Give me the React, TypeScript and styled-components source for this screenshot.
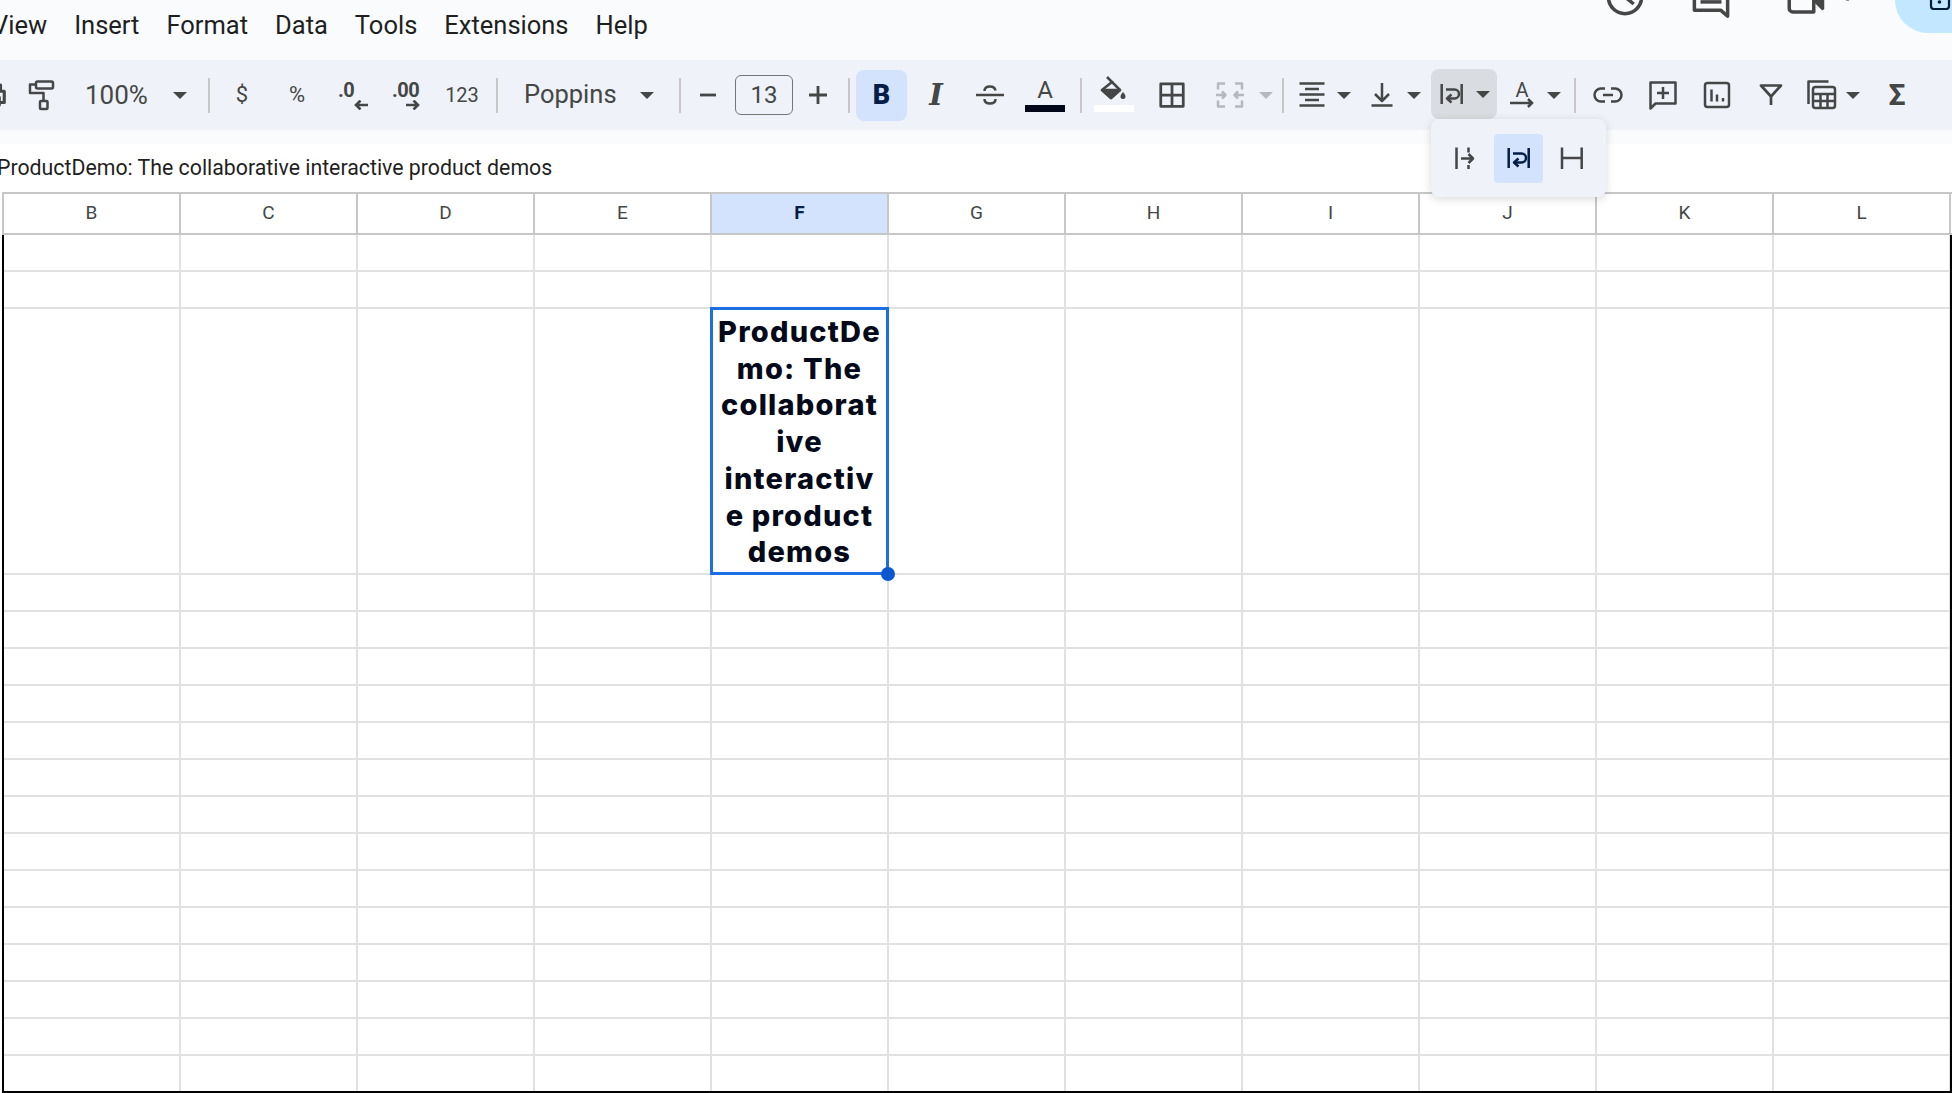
import styled, { createGlobalStyle } from 'styled-components';

const GlobalStyle = createGlobalStyle`
  html, body {
    margin: 0;
    padding: 0;
    height: 100%;
    background: #fff;
    overflow: hidden;
  }
`;

const Page = styled.div`
  width: 1952px;
  height: 1093px;
  overflow: hidden;
  font-family: Roboto, "Liberation Sans", sans-serif;
  color: #1f1f1f;
  background: #fff;
`;

const MenuBar = styled.div`
  height: 60px;
  background: #f9fbfd;
  display: flex;
  align-items: flex-start;
`;

const Menu = styled.nav`
  display: flex;
  gap: 27px;
  margin-left: -8px;
  height: 52px;
  align-items: center;
  font-size: 25.5px;
  line-height: 1;
`;

const MenuItem = styled.span`
  white-space: nowrap;
`;

const Actions = styled.div`
  margin-left: auto;
  display: flex;
  align-items: flex-start;
  color: #444746;
`;

const ActionIcon = styled.svg<{ $ml: number }>`
  width: 42px;
  height: 42px;
  margin-left: ${(p) => p.$ml}px;
  margin-top: -24px;
  flex-shrink: 0;
  fill: none;
  stroke: currentColor;
  stroke-width: 2;
  stroke-linejoin: round;
`;

const MeetCaretTip = styled.span`
  width: 3px;
  height: 1px;
  margin-left: 20.5px;
  background: #9a9a9a;
`;

const ShareButton = styled.div`
  width: 57px;
  height: 33px;
  margin-left: 46px;
  background: #c2e7ff;
  border-bottom-left-radius: 33px;
  color: #001d35;
  display: flex;
  justify-content: flex-end;
`;

const ShareLock = styled.svg`
  width: 22px;
  height: 22px;
  margin-top: -12px;
  margin-right: 1px;
  fill: none;
  stroke: currentColor;
  stroke-width: 2.2;
`;

const Toolbar = styled.div`
  height: 70px;
  background: #eff2f8;
  display: flex;
  align-items: center;
  color: #444746;
`;

const ToolbarGap = styled.div`
  height: 14px;
  background: #f9fbfd;
`;

const Tool = styled.div<{ $w: number; $ml?: number; $muted?: boolean }>`
  width: ${(p) => p.$w}px;
  margin-left: ${(p) => p.$ml ?? 0}px;
  height: 50px;
  flex-shrink: 0;
  display: flex;
  align-items: center;
  justify-content: center;
  position: relative;
  color: ${(p) => (p.$muted ? '#b5b8bc' : 'inherit')};
`;

const Icon = styled.svg<{ $size?: number }>`
  width: ${(p) => p.$size ?? 30}px;
  height: ${(p) => p.$size ?? 30}px;
  flex-shrink: 0;
  fill: none;
  stroke: currentColor;
  stroke-width: 2.5;
  stroke-linejoin: round;
`;

const Caret = styled.span<{ $off?: boolean }>`
  width: 0;
  height: 0;
  border-left: 7px solid transparent;
  border-right: 7px solid transparent;
  border-top: 7px solid ${(p) => (p.$off ? '#b5b8bc' : '#444746')};
  flex-shrink: 0;
`;

const Separator = styled.span`
  width: 2px;
  height: 35px;
  background: #c7c7c7;
`;

const ToolText = styled.span<{ $size?: number; $weight?: number }>`
  font-size: ${(p) => p.$size ?? 25.5}px;
  font-weight: ${(p) => p.$weight ?? 400};
  line-height: 1;
  white-space: nowrap;
`;

const SelectLabel = styled(Tool)`
  justify-content: flex-start;
  padding-left: ${(p) => (p.$w > 100 ? 24 : 7)}px;
  box-sizing: border-box;
`;

const Decimal = styled.div`
  display: flex;
  flex-direction: column;
  align-items: flex-start;
`;

const DecimalText = styled.span`
  font-size: 20px;
  font-weight: 700;
  line-height: 20px;
  letter-spacing: -0.5px;
`;

const DecimalArrow = styled.svg<{ $ml: number }>`
  width: 14px;
  height: 10px;
  margin-left: ${(p) => p.$ml}px;
  fill: none;
  stroke: currentColor;
  stroke-width: 2.6;
`;

const SizeBox = styled.div`
  width: 58px;
  height: 40px;
  margin-left: 15px;
  box-sizing: border-box;
  border: 1.5px solid #747775;
  border-radius: 6px;
  display: flex;
  align-items: center;
  justify-content: center;
  flex-shrink: 0;
`;

const BoldButton = styled.div`
  width: 51px;
  height: 51px;
  margin-left: 1px;
  background: #d3e3fd;
  border-radius: 8px;
  color: #041e49;
  display: flex;
  align-items: center;
  justify-content: center;
  flex-shrink: 0;
`;

const SerifItalic = styled.span`
  font-family: "DejaVu Serif", serif;
  font-style: italic;
  font-weight: 700;
  font-size: 29px;
  line-height: 1;
`;

const ColorTool = styled.div<{ $pb?: number }>`
  display: flex;
  flex-direction: column;
  align-items: center;
  padding-bottom: ${(p) => p.$pb ?? 0}px;
`;

const ColorLetter = styled.span<{ $size?: number }>`
  font-size: ${(p) => p.$size ?? 24}px;
  line-height: ${(p) => p.$size ?? 24}px;
`;

const ColorBar = styled.span<{ $color: string; $mt?: number }>`
  width: 40px;
  height: 7px;
  margin-top: ${(p) => p.$mt ?? 0}px;
  background: ${(p) => p.$color};
`;

const RotationArrow = styled.svg`
  width: 24px;
  height: 10px;
  margin-top: -2px;
  fill: none;
  stroke: currentColor;
  stroke-width: 2.5;
`;

const FillIcon = styled(Icon)`
  width: 32px;
  height: 30px;
`;

const WrapButton = styled.div`
  width: 66px;
  height: 50px;
  margin-left: 7px;
  margin-top: -2px;
  flex-shrink: 0;
  border-radius: 8px;
  background: #d9dce0;
  display: flex;
  align-items: center;
  padding-left: 6px;
  box-sizing: border-box;
  gap: 9px;
  position: relative;
`;

const Popup = styled.div`
  position: absolute;
  top: 50px;
  left: 0;
  width: 175px;
  height: 78px;
  background: #eff2f8;
  border-radius: 8px;
  box-shadow: 0 2px 8px rgba(60, 64, 67, 0.2);
  display: flex;
  align-items: center;
  gap: 9px;
  padding-left: 15px;
  box-sizing: border-box;
  z-index: 5;
`;

const PopupOption = styled.div<{ $active?: boolean }>`
  width: ${(p) => (p.$active ? 49 : 39)}px;
  height: 49px;
  border-radius: 4px;
  background: ${(p) => (p.$active ? '#d3e3fd' : 'transparent')};
  color: ${(p) => (p.$active ? '#041e49' : '#444746')};
  display: flex;
  align-items: center;
  justify-content: center;
`;

const FormulaBar = styled.div`
  height: 48px;
  box-sizing: border-box;
  padding-bottom: 2px;
  display: flex;
  align-items: center;
  margin-left: -3px;
  font-size: 21.3px;
  white-space: nowrap;
`;

const COLUMN_TRACKS = 'repeat(11, 177px)';

const ColumnHeader = styled.div`
  height: 43px;
  box-sizing: border-box;
  margin-left: 2px;
  border-left: 2px solid #c7c7c7;
  border-top: 2px solid #c7c7c7;
  border-bottom: 2px solid #c7c7c7;
  display: grid;
  grid-template-columns: ${COLUMN_TRACKS};
`;

const HeaderCell = styled.div<{ $selected?: boolean }>`
  box-sizing: border-box;
  border-right: 2px solid #c7c7c7;
  padding-bottom: 2px;
  display: flex;
  align-items: center;
  justify-content: center;
  font-size: 19px;
  color: ${(p) => (p.$selected ? '#041e49' : '#444746')};
  font-weight: ${(p) => (p.$selected ? 700 : 400)};
  background: ${(p) => (p.$selected ? '#d3e3fd' : '#fff')};
`;

const Sheet = styled.div`
  margin-left: 2px;
  height: 858px;
  box-sizing: border-box;
  border-left: 2px solid #000;
  border-right: 2px solid #000;
  border-bottom: 2px solid #000;
  overflow: hidden;
`;

const Row = styled.div<{ $h?: number }>`
  height: ${(p) => p.$h ?? 37}px;
  display: grid;
  grid-template-columns: ${COLUMN_TRACKS};
`;

const Cell = styled.div`
  box-sizing: border-box;
  border-right: 2px solid #e1e1e1;
  border-bottom: 2px solid #e1e1e1;
`;

const ActiveCell = styled(Cell)`
  position: relative;
  z-index: 2;
  display: flex;
  align-items: center;
  justify-content: center;
  text-align: center;
  font-family: Inter, "Liberation Sans", sans-serif;
  font-weight: 800;
  font-size: 29px;
  letter-spacing: 1.2px;
  line-height: 36.8px;
  color: #050a1a;
  white-space: nowrap;
  padding-top: 3px;
`;

const Selection = styled.div`
  position: absolute;
  top: -2px;
  left: -2px;
  right: -2px;
  bottom: -2px;
  border: 3px solid #1a6fe3;
`;

const Handle = styled.div`
  position: absolute;
  right: -8px;
  bottom: -8px;
  width: 14px;
  height: 14px;
  border-radius: 50%;
  background: #0b57d0;
`;

const menuItems = ['View', 'Insert', 'Format', 'Data', 'Tools', 'Extensions', 'Help'];
const columns = ['B', 'C', 'D', 'E', 'F', 'G', 'H', 'I', 'J', 'K', 'L'];
const SELECTED_COLUMN = 4;
const SELECTED_ROW = 2;
const cellLines = ['ProductDe', 'mo: The', 'collaborat', 'ive', 'interactiv', 'e product', 'demos'];
const rows = Array.from({ length: 17 }, (_, i) => i);

const WrapIcon = () => (
  <Icon viewBox="0 0 30 30">
    <path d="M4.700 5v20M24.700 5v20" />
    <path d="M9 10.500h8.500a4.500 4.500 0 0 1 0 9H11" />
    <path d="M14.500 15.500 10 19.500l4.500 4" />
  </Icon>
);

const App = () => {
  return (
    <Page>
      <GlobalStyle />
      <MenuBar>
        <Menu>
          {menuItems.map((item) => (
            <MenuItem key={item}>{item}</MenuItem>
          ))}
        </Menu>
        <Actions>
          <ActionIcon $ml={0} viewBox="0 0 24 24">
            <circle cx="12" cy="12" r="9.500" />
            <path d="M12 7v5l5 4" />
          </ActionIcon>
          <ActionIcon $ml={43.5} viewBox="0 0 24 24">
            <path d="M2.500 2h19v21l-4-3.500h-15z" />
            <path d="M6 14.800h12" />
          </ActionIcon>
          <ActionIcon $ml={52} viewBox="0 0 24 24">
            <path d="M3 3h14v17.500H5a2 2 0 0 1-2-2z" />
            <path d="M17 13.500 22 18.500V6z" fill="currentColor" />
          </ActionIcon>
          <MeetCaretTip />
          <ShareButton>
            <ShareLock viewBox="0 0 22 22">
              <rect x="2" y="1" width="18" height="20" rx="3" />
              <circle cx="10.500" cy="14" r="1.800" fill="currentColor" stroke="none" />
            </ShareLock>
          </ShareButton>
        </Actions>
      </MenuBar>

      <Toolbar>
        <Tool $w={22} $ml={-18}>
          <Icon viewBox="0 0 24 24">
            <path d="M6 9V4h12v5M6 18H3v-9h18v9h-3M7 14h10v6H7z" />
          </Icon>
        </Tool>
        <Tool $w={74}>
          <Icon $size={32} viewBox="0 0 32 32">
            <rect x="11" y="2.500" width="17" height="7" rx="1.500" />
            <path d="M11 5.500H5v8.500h13.500v8" />
            <rect x="15" y="22" width="7.500" height="8" rx="1" />
          </Icon>
        </Tool>
        <SelectLabel $w={82}>
          <ToolText $size={26}>100%</ToolText>
        </SelectLabel>
        <Tool $w={40}>
          <Caret />
        </Tool>
        <Tool $w={10} $ml={4}>
          <Separator />
        </Tool>
        <Tool $w={56}>
          <ToolText $size={22}>$</ToolText>
        </Tool>
        <Tool $w={54}>
          <ToolText $size={22}>%</ToolText>
        </Tool>
        <Tool $w={58}>
          <Decimal>
            <DecimalText>.0</DecimalText>
            <DecimalArrow $ml={16} viewBox="0 0 14 10">
              <path d="M14 5H2M6.500.5 2 5l4.500 4.500" />
            </DecimalArrow>
          </Decimal>
        </Tool>
        <Tool $w={48}>
          <Decimal>
            <DecimalText>.00</DecimalText>
            <DecimalArrow $ml={14} viewBox="0 0 14 10">
              <path d="M0 5h12M7.500.5 12 5 7.500 9.500" />
            </DecimalArrow>
          </Decimal>
        </Tool>
        <Tool $w={64}>
          <ToolText $size={20}>123</ToolText>
        </Tool>
        <Tool $w={6}>
          <Separator />
        </Tool>
        <SelectLabel $w={130}>
          <ToolText>Poppins</ToolText>
        </SelectLabel>
        <Tool $w={34}>
          <Caret />
        </Tool>
        <Tool $w={32}>
          <Separator />
        </Tool>
        <Tool $w={24}>
          <Icon viewBox="0 0 30 30">
            <path d="M7 15h16" strokeWidth="2.800" />
          </Icon>
        </Tool>
        <SizeBox>
          <ToolText $size={24}>13</ToolText>
        </SizeBox>
        <Tool $w={50}>
          <Icon viewBox="0 0 30 30">
            <path d="M6 15h18M15 6v18" strokeWidth="2.800" />
          </Icon>
        </Tool>
        <Tool $w={12}>
          <Separator />
        </Tool>
        <BoldButton>
          <ToolText $size={27} $weight={900}>B</ToolText>
        </BoldButton>
        <Tool $w={58}>
          <SerifItalic>I</SerifItalic>
        </Tool>
        <Tool $w={50}>
          <Icon viewBox="0 0 30 30">
            <path d="M1 15h28" />
            <path d="M9.500 11c0-3 2.500-4.500 5.500-4.500s5 1.500 5.500 4M9.500 19c0 3 2.500 4.500 5.500 4.500s5.500-1.500 5.500-4.500" />
          </Icon>
        </Tool>
        <Tool $w={60}>
          <ColorTool>
            <ColorLetter>A</ColorLetter>
            <ColorBar $color="#00081a" $mt={2.5} />
          </ColorTool>
        </Tool>
        <Tool $w={12}>
          <Separator />
        </Tool>
        <Tool $w={54}>
          <ColorTool $pb={3}>
            <FillIcon viewBox="0 0 32 30">
              <path d="M9 2l6 6" />
              <path d="M14 7 4 15l9 8 9-8z" />
              <path d="M4 15h18l-9 8z" fill="currentColor" />
              <path d="M25 17c1.500 2 2.500 3.200 2.500 4.500a2.500 2.500 0 0 1-5 0c0-1.300 1-2.500 2.500-4.500z" fill="currentColor" stroke="none" />
            </FillIcon>
            <ColorBar $color="#fff" />
          </ColorTool>
        </Tool>
        <Tool $w={62}>
          <Icon viewBox="0 0 24 24">
            <path d="M3 3h18v18H3zM12 3v18M3 12h18" strokeWidth="2.200" />
          </Icon>
        </Tool>
        <Tool $w={54} $muted>
          <Icon viewBox="0 0 30 30">
            <path d="M3 9.500v-6h7M3 20.500v6h7M27 9.500v-6h-7M27 20.500v6h-7" />
            <path d="M1 15h9M7 11.500l3.500 3.500-3.500 3.500M29 15h-9M23 11.500 19.500 15l3.500 3.500" />
          </Icon>
        </Tool>
        <Tool $w={18}>
          <Caret $off />
        </Tool>
        <Tool $w={16}>
          <Separator />
        </Tool>
        <Tool $w={42}>
          <Icon viewBox="0 0 30 30">
            <path d="M2.500 3.500h25M8 9h14M2.500 14.500h25M8 20h14M2.500 25.500h25" strokeWidth="2.700" />
          </Icon>
        </Tool>
        <Tool $w={21}>
          <Caret />
        </Tool>
        <Tool $w={32} $ml={12}>
          <Icon viewBox="0 0 30 30">
            <path d="M15 3v17M8 14l7 7 7-7M4.500 25.500h21" />
          </Icon>
        </Tool>
        <Tool $w={21} $ml={5}>
          <Caret />
        </Tool>
        <WrapButton>
          <WrapIcon />
          <Caret />
          <Popup>
            <PopupOption>
              <Icon viewBox="0 0 30 30">
                <path d="M5.500 4.500V26M17.500 4.500v5M17.500 22v4" />
                <path d="M10 15.500h12M17.500 11l4.500 4.500-4.500 4.500" />
              </Icon>
            </PopupOption>
            <PopupOption $active>
              <WrapIcon />
            </PopupOption>
            <PopupOption>
              <Icon viewBox="0 0 30 30">
                <path d="M5 4.500V26M24.700 4.500V26M5 15h19.700" />
              </Icon>
            </PopupOption>
          </Popup>
        </WrapButton>
        <Tool $w={50}>
          <ColorTool $pb={2}>
            <ColorLetter $size={20}>A</ColorLetter>
            <RotationArrow viewBox="0 0 24 10">
              <path d="M0 5h22M18 1l4 4-4 4" />
            </RotationArrow>
          </ColorTool>
        </Tool>
        <Tool $w={14}>
          <Caret />
        </Tool>
        <Tool $w={28}>
          <Separator />
        </Tool>
        <Tool $w={38}>
          <Icon viewBox="0 0 30 30">
            <path d="M12 8.500H8a6.500 6.500 0 0 0 0 13h4M18 8.500h4a6.500 6.500 0 0 1 0 13h-4M10 15h10" />
          </Icon>
        </Tool>
        <Tool $w={72}>
          <Icon viewBox="0 0 30 30">
            <path d="M2.500 2.500h25v21H7.500l-5 5zM15 7v12M9 13h12" />
          </Icon>
        </Tool>
        <Tool $w={36}>
          <Icon viewBox="0 0 30 30">
            <rect x="3" y="3" width="24" height="24" rx="2.500" />
            <path d="M9.500 9.500v12M15 14.500v7M21 18v3.500" />
          </Icon>
        </Tool>
        <Tool $w={72}>
          <Icon viewBox="0 0 30 30">
            <path d="M5 5.500h20L15 16.500zM15 16.500V25" strokeWidth="2.700" />
          </Icon>
        </Tool>
        <Tool $w={30}>
          <Icon $size={32} viewBox="0 0 32 32">
            <path d="M2.500 25V2.500h20" />
            <rect x="7" y="8" width="22" height="21" rx="2.500" />
            <path d="M7 15h22M7 22h22M14.500 15v14M21.500 15v14" />
          </Icon>
        </Tool>
        <Tool $w={32}>
          <Caret />
        </Tool>
        <Tool $w={56}>
          <ToolText $size={30} $weight={700}>Σ</ToolText>
        </Tool>
      </Toolbar>
      <ToolbarGap />

      <FormulaBar>ProductDemo: The collaborative interactive product demos</FormulaBar>

      <ColumnHeader>
        {columns.map((col, i) => (
          <HeaderCell key={col} $selected={i === SELECTED_COLUMN}>
            {col}
          </HeaderCell>
        ))}
      </ColumnHeader>

      <Sheet>
        {rows.map((r) => (
          <Row key={r} $h={r === SELECTED_ROW ? 266 : 37}>
            {columns.map((col, i) =>
              r === SELECTED_ROW && i === SELECTED_COLUMN ? (
                <ActiveCell key={col}>
                  <div>
                    {cellLines.map((line) => (
                      <div key={line}>{line}</div>
                    ))}
                  </div>
                  <Selection />
                  <Handle />
                </ActiveCell>
              ) : (
                <Cell key={col} />
              ),
            )}
          </Row>
        ))}
      </Sheet>
    </Page>
  );
};

export default App;
